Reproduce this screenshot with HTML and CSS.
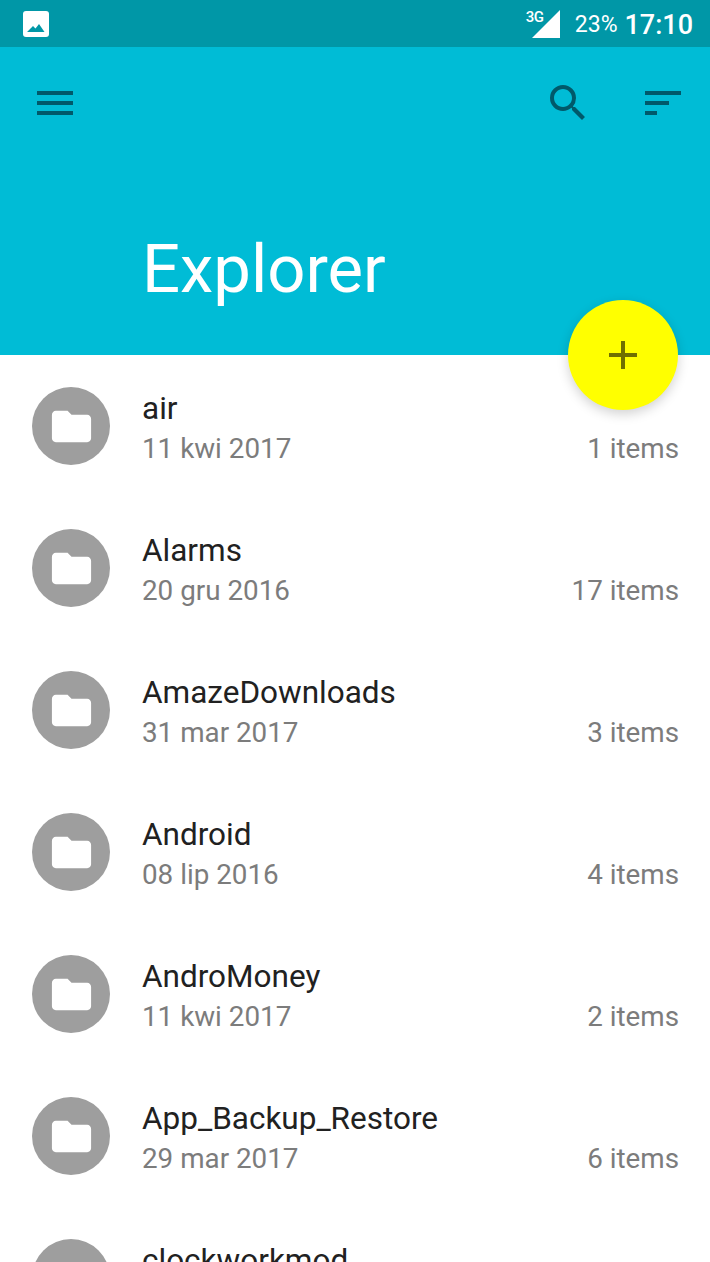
FILE: index.html
```html
<!DOCTYPE html>
<html lang="pl">
<head>
    <meta charset="UTF-8">
    <meta name="viewport" content="width=device-width, initial-scale=1.0">
    <title>Explorer</title>
    <link rel="stylesheet" href="styles.css">
</head>
<body>
    <div class="status-bar">
        <svg class="status-image" viewBox="0 0 26 26">
            <path fill="#fff" d="M3 0h20a3 3 0 0 1 3 3v20a3 3 0 0 1-3 3H3a3 3 0 0 1-3-3V3a3 3 0 0 1 3-3z"/>
            <path fill="#0097a7" d="M4 21l6-6 2.500 2.500L16 13l5.500 8z"/>
        </svg>
        <div class="status-right">
            <div class="signal">
                <span class="signal-type">3G</span>
                <svg class="signal-icon" viewBox="0 0 28 28"><path fill="#fff" d="M28 0v28H0z"/></svg>
            </div>
            <span class="battery">23%</span>
            <span class="clock">17:10</span>
        </div>
    </div>

    <header class="app-header">
        <div class="toolbar">
            <svg class="tool-icon" viewBox="0 0 24 24"><path d="M3 18h18v-2H3v2zm0-5h18v-2H3v2zm0-7v2h18V6H3z"/></svg>
            <div class="toolbar-right">
                <svg class="tool-icon" viewBox="0 0 24 24"><path d="M15.500 14h-.79l-.28-.27A6.470 6.470 0 0 0 16 9.500 6.500 6.500 0 1 0 9.500 16c1.610 0 3.090-.59 4.230-1.570l.27.28v.79l5 4.990L20.490 19l-4.990-5zm-6 0C7.010 14 5 11.990 5 9.500S7.010 5 9.500 5 14 7.010 14 9.500 11.990 14 9.500 14z"/></svg>
                <svg class="tool-icon" viewBox="0 0 24 24"><path d="M3 18h6v-2H3v2zM3 6v2h18V6H3zm0 7h12v-2H3v2z"/></svg>
            </div>
        </div>
        <h1 class="app-title">Explorer</h1>
    </header>

    <button class="fab" type="button">
        <svg viewBox="0 0 24 24"><path d="M19 13h-6v6h-2v-6H5v-2h6V5h2v6h6v2z"/></svg>
    </button>

    <ul class="file-list">
        <li class="file-row">
            <span class="file-icon"><svg viewBox="0 0 24 24"><path d="M10 4H4c-1.100 0-2 .9-2 2v12c0 1.100.9 2 2 2h16c1.100 0 2-.9 2-2V8c0-1.100-.9-2-2-2h-8l-2-2z"/></svg></span>
            <div class="file-info">
                <div class="file-name">air</div>
                <div class="file-meta"><span>11 kwi 2017</span><span>1 items</span></div>
            </div>
        </li>
        <li class="file-row">
            <span class="file-icon"><svg viewBox="0 0 24 24"><path d="M10 4H4c-1.100 0-2 .9-2 2v12c0 1.100.9 2 2 2h16c1.100 0 2-.9 2-2V8c0-1.100-.9-2-2-2h-8l-2-2z"/></svg></span>
            <div class="file-info">
                <div class="file-name">Alarms</div>
                <div class="file-meta"><span>20 gru 2016</span><span>17 items</span></div>
            </div>
        </li>
        <li class="file-row">
            <span class="file-icon"><svg viewBox="0 0 24 24"><path d="M10 4H4c-1.100 0-2 .9-2 2v12c0 1.100.9 2 2 2h16c1.100 0 2-.9 2-2V8c0-1.100-.9-2-2-2h-8l-2-2z"/></svg></span>
            <div class="file-info">
                <div class="file-name">AmazeDownloads</div>
                <div class="file-meta"><span>31 mar 2017</span><span>3 items</span></div>
            </div>
        </li>
        <li class="file-row">
            <span class="file-icon"><svg viewBox="0 0 24 24"><path d="M10 4H4c-1.100 0-2 .9-2 2v12c0 1.100.9 2 2 2h16c1.100 0 2-.9 2-2V8c0-1.100-.9-2-2-2h-8l-2-2z"/></svg></span>
            <div class="file-info">
                <div class="file-name">Android</div>
                <div class="file-meta"><span>08 lip 2016</span><span>4 items</span></div>
            </div>
        </li>
        <li class="file-row">
            <span class="file-icon"><svg viewBox="0 0 24 24"><path d="M10 4H4c-1.100 0-2 .9-2 2v12c0 1.100.9 2 2 2h16c1.100 0 2-.9 2-2V8c0-1.100-.9-2-2-2h-8l-2-2z"/></svg></span>
            <div class="file-info">
                <div class="file-name">AndroMoney</div>
                <div class="file-meta"><span>11 kwi 2017</span><span>2 items</span></div>
            </div>
        </li>
        <li class="file-row">
            <span class="file-icon"><svg viewBox="0 0 24 24"><path d="M10 4H4c-1.100 0-2 .9-2 2v12c0 1.100.9 2 2 2h16c1.100 0 2-.9 2-2V8c0-1.100-.9-2-2-2h-8l-2-2z"/></svg></span>
            <div class="file-info">
                <div class="file-name">App_Backup_Restore</div>
                <div class="file-meta"><span>29 mar 2017</span><span>6 items</span></div>
            </div>
        </li>
        <li class="file-row">
            <span class="file-icon"><svg viewBox="0 0 24 24"><path d="M10 4H4c-1.100 0-2 .9-2 2v12c0 1.100.9 2 2 2h16c1.100 0 2-.9 2-2V8c0-1.100-.9-2-2-2h-8l-2-2z"/></svg></span>
            <div class="file-info">
                <div class="file-name">clockworkmod</div>
            </div>
        </li>
    </ul>
</body>
</html>
```

FILE: styles.css
```css
* {
    margin: 0;
    padding: 0;
    box-sizing: border-box;
}

html, body {
    height: 100%;
    overflow: hidden;
}

body {
    position: relative;
    font-family: Roboto, "Liberation Sans", sans-serif;
    background: #fff;
    color: #212121;
}

.status-bar {
    height: 47px;
    background: #0097a7;
    color: #fff;
    display: flex;
    align-items: center;
    justify-content: space-between;
    padding: 1px 17px 0 23px;
}

.status-image {
    width: 26px;
    height: 26px;
}

.status-right {
    display: flex;
    align-items: center;
    padding-top: 1px;
}

.signal {
    position: relative;
    width: 34px;
    height: 28px;
    margin-right: 15px;
    margin-top: -1px;
}

.signal-type {
    position: absolute;
    left: 0;
    top: 0;
    font-size: 15px;
    line-height: 14px;
    font-weight: 500;
    letter-spacing: -0.5px;
}

.signal-icon {
    position: absolute;
    right: 0;
    bottom: 0;
    width: 28px;
    height: 28px;
}

.battery {
    font-size: 23px;
    margin-right: 7px;
}

.clock {
    font-size: 27px;
    font-weight: 500;
}

.app-header {
    height: 308px;
    background: #00bcd6;
    padding-top: 32px;
}

.toolbar {
    display: flex;
    justify-content: space-between;
    padding: 0 23px 0 31px;
}

.toolbar-right {
    display: flex;
    gap: 47px;
}

.tool-icon {
    width: 48px;
    height: 48px;
    fill: #00596a;
}

.app-title {
    font-size: 67px;
    font-weight: 400;
    line-height: 75px;
    color: #fff;
    margin: 105px 0 0 142px;
}

.fab {
    position: absolute;
    left: 568px;
    top: 300px;
    width: 110px;
    height: 110px;
    border: none;
    border-radius: 50%;
    background: #ffff00;
    box-shadow: 0 4px 12px rgba(0, 0, 0, 0.18);
    display: flex;
    align-items: center;
    justify-content: center;
}

.fab svg {
    width: 48px;
    height: 48px;
    fill: #6f6f00;
}

.file-list {
    list-style: none;
}

.file-row {
    height: 142px;
    padding: 32px 31px 0 32px;
    display: flex;
    gap: 32px;
}

.file-icon {
    flex: none;
    width: 78px;
    height: 78px;
    border-radius: 50%;
    background: #9e9e9e;
    display: flex;
    align-items: center;
    justify-content: center;
}

.file-icon svg {
    width: 47px;
    height: 47px;
    fill: #fff;
}

.file-info {
    flex: 1;
}

.file-name {
    font-size: 31.500px;
    line-height: 40px;
    margin-top: 2px;
}

.file-meta {
    display: flex;
    justify-content: space-between;
    font-size: 27.800px;
    line-height: 39px;
    color: #7c7c7c;
}
```
